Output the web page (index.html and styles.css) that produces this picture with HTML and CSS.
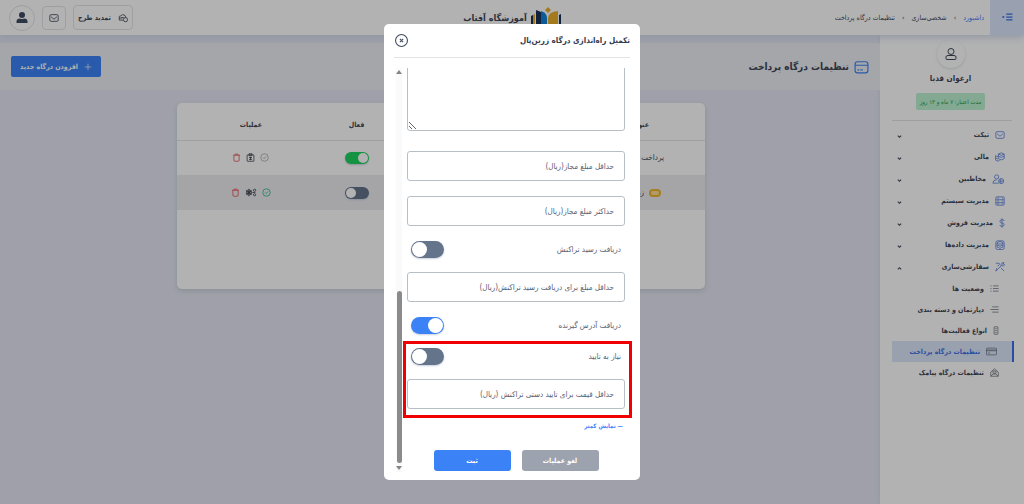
FILE: index.html
```html
<!DOCTYPE html>
<html lang="fa" dir="rtl">
<head>
<meta charset="utf-8">
<title>تنظیمات درگاه پرداخت</title>
<link rel="stylesheet" href="styles.css">
</head>
<body>
<svg class="defs" aria-hidden="true">
  <symbol id="mail" viewBox="0 0 24 24"><rect x="2" y="4" width="20" height="16" rx="3"/><path d="M5 9l7 6 7-6"/></symbol>
  <symbol id="chev" viewBox="0 0 24 24"><path d="M4 8l8 8 8-8"/></symbol>
  <symbol id="trash" viewBox="0 0 24 24"><path d="M3 6h18M8 6V3h8v3M5 6v13q0 3 3 3h8q3 0 3-3V6"/></symbol>
  <symbol id="check" viewBox="0 0 24 24"><circle cx="12" cy="12" r="10"/><path d="M8 12l3 3 5-6"/></symbol>
  <symbol id="card" viewBox="0 0 24 24"><rect x="1" y="3" width="22" height="19" rx="4"/><path d="M1 9h22M5 17h3M10 17h4"/></symbol>
</svg>

<header class="topbar">
  <div class="lead">
    <button class="menu-toggle" aria-label="منو"><svg class="icon" viewBox="0 0 24 24"><path d="M9 5h15M9 12h15M9 19h15"/><circle cx="2" cy="12" r="1"/></svg></button>
    <nav class="crumbs"><a href="#">داشبورد</a><i>›</i><span>شخصی‌سازی</span><i>›</i><span>تنظیمات درگاه پرداخت</span></nav>
  </div>
  <div class="brand">
    <svg class="brand-logo" viewBox="0 0 30 24"><path fill="#1b3157" d="M0 9l2-1v16H0zM5 3l5 2v19H5zM28 8l2-1v17h-2z"/><path fill="#1283d8" d="M10 4q6 2 6 7v13h-6z"/><path fill="#eab02c" d="M2 8l2-1v17H2zM17 11q0-6 10-7v20H17zM17 0l3 3-3 3-3-3z"/></svg>
    <span>آموزشگاه آفتاب</span>
  </div>
  <div class="tools">
    <button class="tool plan"><svg class="icon" viewBox="0 0 24 24"><path d="M3 17V9q0-2 3-2 5-6 11-1l2 5M3 17h9M8 11h6"/><circle cx="18" cy="16" r="5"/><path d="M3 12h7"/></svg>تمدید طرح</button>
    <button class="tool inbox" aria-label="پیام‌ها"><svg class="icon"><use href="#mail"/></svg></button>
    <button class="tool user" aria-label="کاربر"><svg viewBox="0 0 24 24"><circle cx="12" cy="7" r="6"/><path d="M1 23v-3q0-6 7-6 4 2 8 0 7 0 7 6v3z"/></svg></button>
  </div>
</header>

<div class="shell">
  <aside class="sidebar">
    <div class="profile">
      <div class="avatar"><svg class="icon" viewBox="0 0 24 24"><circle cx="12" cy="7" r="6"/><path d="M2 18q0-3 4-3h12q4 0 4 3v3q0 2-2 2H4q-2 0-2-2z"/></svg></div>
      <strong>ارغوان قدبا</strong>
      <span class="credit">مدت اعتبار: ۷ ماه و ۱۳ روز</span>
    </div>
    <ul class="menu">
      <li><a href="#"><svg class="icon"><use href="#mail"/></svg>تیکت<svg class="arrow"><use href="#chev"/></svg></a></li>
      <li><a href="#"><svg class="icon" viewBox="0 0 24 24"><path d="M8 5l7-3 7 3-7 3zM8 5v11l7 3 7-3V5M8 10l7 3 7-3M1 9v10l6 3 4-2M1 14l6 3M1 9l6 2"/></svg>مالی<svg class="arrow"><use href="#chev"/></svg></a></li>
      <li><a href="#"><svg class="icon wide" viewBox="0 0 29 24"><circle cx="10" cy="7" r="5"/><path d="M1 22q0-8 9-8M1 22h14M20 11v12M14 17h12"/><circle cx="21" cy="17" r="6"/></svg>مخاطبین<svg class="arrow"><use href="#chev"/></svg></a></li>
      <li><a href="#"><svg class="icon" viewBox="0 0 24 24"><rect x="2" y="2" width="20" height="20" rx="2"/><path d="M2 9h20M2 16h20M16 5h3M16 12h3M16 19h3M5 5h5M5 12h5M5 19h5"/></svg>مدیریت سیستم<svg class="arrow"><use href="#chev"/></svg></a></li>
      <li><a href="#"><svg class="icon slim" viewBox="0 0 14 24"><path d="M12 7q0-3-5-3T2 8t5 4 5 4-5 4-5-3M7 1v22"/></svg>مدیریت فروش<svg class="arrow"><use href="#chev"/></svg></a></li>
      <li><a href="#"><svg class="icon" viewBox="0 0 24 24"><rect x="2" y="2" width="20" height="21" rx="4"/><ellipse cx="12" cy="7" rx="7" ry="3"/><path d="M5 7v10q7 6 14 0V7M5 12q7 6 14 0"/></svg>مدیریت داده‌ها<svg class="arrow"><use href="#chev"/></svg></a></li>
      <li><a href="#"><svg class="icon" viewBox="0 0 24 24"><path d="M2 3h8l3 5M2 22L17 7l-1-4 5-2-1 4 3 1-3 4-3-1M14 14l8 8M6 10l4-3M2 22l2-7"/></svg>سفارشی‌سازی<svg class="arrow up"><use href="#chev"/></svg></a>
        <ul class="submenu">
          <li><a href="#"><svg class="icon" viewBox="0 0 24 24"><path d="M8 5h15M8 12h15M8 19h15M1 5h3M1 12h3M1 19h3"/></svg>وضعیت ها</a></li>
          <li><a href="#"><svg class="icon" viewBox="0 0 24 24"><path d="M6 5h17M1 12h22M6 19h17"/></svg>دپارتمان و دسته بندی</a></li>
          <li><a href="#"><svg class="icon slim" viewBox="0 0 14 24"><rect x="2" y="2" width="10" height="20" rx="1"/><path d="M5 7h4M5 12h4M5 17h4"/></svg>انواع فعالیت‌ها</a></li>
          <li><a href="#" class="active"><svg class="icon wide" viewBox="0 0 29 24"><rect x="1" y="3" width="27" height="18" rx="2"/><path d="M1 8h27M1 10h27M5 16h6"/></svg>تنظیمات درگاه پرداخت</a></li>
          <li><a href="#"><svg class="icon" viewBox="0 0 24 24"><path d="M2 11l10-9 10 9v11H2zM2 22l6-6h8l6 6M8 8h8v6H8z"/></svg>تنظیمات درگاه پیامک</a></li>
        </ul>
      </li>
    </ul>
  </aside>

  <main class="content">
    <div class="page-head">
      <h1><svg class="icon"><use href="#card"/></svg>تنظیمات درگاه پرداخت</h1>
      <button class="add"><svg class="icon" viewBox="0 0 24 24"><path d="M12 2v20M2 12h20"/></svg>افزودن درگاه جدید</button>
    </div>
    <section class="card">
      <table>
        <colgroup><col class="c-title"><col><col class="c-active"><col class="c-actions"></colgroup>
        <thead><tr><th class="name">عنوان</th><th></th><th>فعال</th><th>عملیات</th></tr></thead>
        <tbody>
          <tr><td class="name">پرداخت</td><td></td>
            <td><input type="checkbox" class="switch small green" aria-label="فعال" checked></td>
            <td><div class="actions"><svg class="icon muted"><use href="#check"/></svg><svg class="icon dark" viewBox="0 0 24 24"><rect x="3" y="5" width="18" height="17" rx="1"/><path d="M8 2h8v5H8zM8 12h8M8 17h8M12 10v9"/></svg><svg class="icon red"><use href="#trash"/></svg></div></td></tr>
          <tr><td class="name"><span class="coin"></span>زرین‌پال</td><td></td>
            <td><input type="checkbox" class="switch small" aria-label="فعال"></td>
            <td><div class="actions"><svg class="icon teal"><use href="#check"/></svg><svg class="icon dark wide" viewBox="0 0 29 24"><circle cx="9" cy="12" r="7"/><circle cx="9" cy="12" r="3"/><path d="M9 2v20M1 7l16 10M1 17L17 7"/><circle cx="24" cy="6" r="3"/><circle cx="24" cy="18" r="3"/><path d="M18 12h8"/></svg><svg class="icon red"><use href="#trash"/></svg></div></td></tr>
        </tbody>
      </table>
    </section>
  </main>
</div>

<div class="overlay">
  <form class="modal" role="dialog" aria-labelledby="dlg-title">
    <div class="modal-head">
      <h2 id="dlg-title">تکمیل راه‌اندازی درگاه زرین‌پال</h2>
      <button type="button" class="close" aria-label="بستن"><svg viewBox="0 0 24 24"><circle cx="12" cy="12" r="11"/><path d="M9 9l6 6M15 9l-6 6"/></svg></button>
    </div>
    <div class="modal-body">
      <div class="fields">
        <textarea class="field note" aria-label="توضیحات"></textarea>
        <input class="field" type="text" placeholder="حداقل مبلغ مجاز(ریال)" aria-label="حداقل مبلغ مجاز">
        <input class="field" type="text" placeholder="حداکثر مبلغ مجاز(ریال)" aria-label="حداکثر مبلغ مجاز">
        <label class="option">دریافت رسید تراکنش<input type="checkbox" class="switch"></label>
        <input class="field" type="text" placeholder="حداقل مبلغ برای دریافت رسید تراکنش(ریال)" aria-label="حداقل مبلغ رسید">
        <label class="option">دریافت آدرس گیرنده<input type="checkbox" class="switch" checked></label>
        <div class="group">
          <label class="option">نیاز به تایید<input type="checkbox" class="switch"></label>
          <input class="field" type="text" placeholder="حداقل قیمت برای تایید دستی تراکنش (ریال)" aria-label="حداقل قیمت تایید دستی">
          <span class="highlight"></span>
        </div>
        <a class="less" href="#">— نمایش کمتر</a>
        <div class="buttons"><button type="button" class="btn cancel">لغو عملیات</button><button type="submit" class="btn save">ثبت</button></div>
      </div>
      <div class="scrollbar"><span class="tip top"></span><span class="thumb"></span><span class="tip bottom"></span></div>
    </div>
  </form>
</div>
</body>
</html>
```

FILE: styles.css
```css
* { box-sizing: border-box; }
body {
  margin: 0;
  height: 100vh;
  overflow: hidden;
  display: flex;
  flex-direction: column;
  background: #e4e6f2;
  color: #3f4757;
  font: 7px "DejaVu Sans Condensed", "DejaVu Sans", sans-serif;
}
button, input, textarea { font: inherit; color: inherit; }
button { padding: 0; border: 0; cursor: pointer; }
a { color: inherit; text-decoration: none; }
ul { list-style: none; margin: 0; padding: 0; }
.defs { position: absolute; width: 0; height: 0; }
.icon { width: 10px; height: 10px; flex: none; fill: none; stroke: currentColor; stroke-width: 2; }
.icon.wide { width: 13px; }
.icon.slim { width: 6px; }

.topbar {
  height: 35px;
  flex: none;
  position: relative;
  z-index: 1;
  display: grid;
  grid-template-columns: 1fr auto 1fr;
  align-items: center;
  background: #fff;
  box-shadow: 0 2px 8px #cbd5e8;
}
.lead { display: flex; align-items: center; }
.menu-toggle { width: 34px; height: 35px; background: #dbe5fd; color: #3b6fe0; }
.menu-toggle .icon { width: 13px; height: 10px; stroke-width: 3; }
.crumbs { display: flex; gap: 7px; padding-right: 6px; font-size: 7px; }
.crumbs a { color: #3b82f6; }
.crumbs i { font-style: normal; }
.brand { display: flex; align-items: center; gap: 4px; font-size: 9px; font-weight: bold; }
.brand-logo { width: 30px; height: 24px; margin-top: 2px; }
.tools { display: flex; justify-content: flex-end; align-items: center; gap: 7px; padding-left: 9px; }
.tool {
  display: flex;
  align-items: center;
  justify-content: center;
  gap: 7px;
  height: 25px;
  border: 1px solid #e2e4e8;
  border-radius: 4px;
  background: #fff;
}
.plan { width: 60px; font-weight: bold; }
.inbox { width: 24px; height: 24px; }
.user { width: 26px; height: 26px; border-radius: 50%; }
.user svg { width: 12px; height: 13px; fill: #3f4c60; }

.shell { flex: 1; display: flex; min-height: 0; }
.sidebar { width: 144px; flex: none; padding: 5px 10px 0 12px; background: #fff; box-shadow: 0 0 4px #ccd2e4; }
.profile { display: flex; flex-direction: column; align-items: center; margin-right: 2px; padding: 0 3px 10px 0; border-bottom: 1px solid #e2e3e6; }
.avatar { width: 28px; height: 28px; display: grid; place-items: center; border-radius: 50%; box-shadow: 0 1px 3px #dcdfe5; }
.avatar .icon { width: 12px; height: 14px; }
.profile strong { margin-top: 4px; font-size: 8px; line-height: 14px; }
.credit { margin-top: 7px; padding: 0 4px; border-radius: 2px; background: #bdf2d2; color: #189a50; font-size: 6px; line-height: 17px; white-space: nowrap; -webkit-text-stroke: 0; }
.menu { padding-top: 3px; }
.menu a { display: flex; align-items: center; gap: 6px; height: 22px; padding: 0 9px 0 5px; font-weight: bold; white-space: nowrap; }
.menu .icon { color: #5f83dc; }
.arrow { width: 5px; height: 5px; margin: 2px auto 0 0; fill: none; stroke: currentColor; stroke-width: 5; }
.arrow.up { transform: rotate(180deg); }
.menu .submenu a { height: 21px; padding: 0 15px; }
.menu .submenu .icon { width: 9px; height: 9px; color: #6b7280; }
.menu .submenu .wide { width: 11px; }
.menu .submenu .slim { width: 6px; }
.menu .submenu .active { border-right: 2px solid #3b6ff0; background: #dce7fb; color: #3b72e8; }

.content { flex: 1; min-width: 0; padding-top: 8px; }
.page-head { display: flex; align-items: center; justify-content: space-between; height: 47px; padding: 0 11px; background: #edeef3; }
.page-head h1 { display: flex; align-items: center; gap: 5px; margin: 0; font-size: 10px; }
.page-head h1 .icon { width: 15px; height: 14px; color: #3b82f6; }
.add { display: flex; align-items: center; justify-content: center; gap: 6px; width: 90px; height: 21px; border-radius: 2px; background: #3b82f6; color: #fff; font-weight: bold; }
.add .icon { width: 8px; height: 8px; }
.card { width: 60%; height: 186px; margin: 13px 175px 0 0; overflow: hidden; border-radius: 5px; background: #fff; box-shadow: 0 2px 5px #c5ced8; }
table { width: 100%; table-layout: fixed; border-collapse: collapse; }
.c-title { width: 26%; }
.c-active { width: 12%; }
.c-actions { width: 28%; }
th { height: 37px; padding: 8px 0 0; border-bottom: 1px solid #e4e5e8; font-size: 7px; }
td { height: 35px; padding: 0; text-align: center; font-size: 8px; }
.name { padding-right: 41px; text-align: right; white-space: nowrap; }
th.name { padding-right: 56px; }
tbody tr:nth-child(2) { background: #ededf0; }
.coin { display: inline-block; width: 12px; height: 8px; margin: 0 3px 0 5px; border: 2px solid #eeb52d; border-radius: 4px; background: #fbe09a; vertical-align: middle; }
.actions { display: flex; align-items: center; justify-content: center; gap: 5px; }
.actions .icon { width: 9px; height: 9px; }
.actions .wide { width: 12px; }
.muted { color: #a3a5a9; }
.dark { color: #333a46; }
.red { color: #e5484d; }
.teal { color: #17b58a; }

.switch {
  appearance: none;
  width: 33px;
  height: 17px;
  margin: 0;
  padding: 1px;
  border-radius: 9px;
  background: #64748b;
  display: inline-flex;
  justify-content: flex-end;
  vertical-align: middle;
  box-shadow: 0 1px 2px #c9cfdd;
}
.switch::before { content: ""; width: 15px; height: 15px; border-radius: 50%; background: #fff; }
.switch:checked { justify-content: flex-start; background: #3b82f6; }
.switch.small { width: 24px; height: 12px; }
.switch.small::before { width: 10px; height: 10px; }
.switch.green:checked { background: #20d35f; }

.overlay { position: fixed; inset: 0; z-index: 2; display: flex; align-items: center; justify-content: center; background: rgba(0, 0, 0, .3); }
.modal { width: 256px; height: 456px; display: flex; flex-direction: column; padding: 0 0 8px; border-radius: 5px; background: #fff; }
.modal-head { display: flex; align-items: center; justify-content: space-between; height: 34px; flex: none; margin: 0 10px 10px; padding-left: 1px; border-bottom: 1px solid #e1e3e6; }
.modal-head h2 { margin: 0; color: #323c50; font-size: 8px; }
.close { width: 13px; height: 13px; background: none; }
.close svg { display: block; fill: none; stroke: #3f4b60; stroke-width: 2; }
.modal-body { flex: 1; min-height: 0; display: flex; gap: 5px; padding: 0 15px 0 10px; overflow: hidden; color: #566174; }
.fields { flex: 1; min-width: 0; display: flex; flex-direction: column; justify-content: flex-end; gap: 15px; }
.field { width: 100%; height: 30px; flex: none; padding: 0 10px; border: 1px solid #b7bfc6; border-radius: 3px; background: #fff; font-size: 8px; }
.field::placeholder { color: #566174; opacity: 1; }
.note { height: 90px; margin-bottom: 5px; resize: vertical; }
.option { display: flex; align-items: center; justify-content: space-between; height: 16px; flex: none; padding: 0 4px; color: #566174; font-size: 8px; }
.group { position: relative; display: flex; flex-direction: column; gap: 15px; }
.highlight { position: absolute; inset: -7px -7px -9px -4px; border: 3px solid #f00000; pointer-events: none; }
.less { align-self: flex-start; margin: -4px 2px 3px; color: #3b82f6; font-size: 6px; font-weight: bold; line-height: 12px; }
.buttons { display: flex; justify-content: center; gap: 11px; padding-bottom: 1px; }
.btn { width: 77px; height: 21px; border-radius: 3px; color: #fff; font-size: 7px; font-weight: bold; }
.cancel { background: #9ca3af; }
.save { background: #3b82f6; }
.scrollbar { width: 6px; flex: none; margin-left: 2px; display: flex; flex-direction: column; align-items: center; padding: 2px 0; background: #fafafa; }
.thumb { width: 5px; flex: 0 0 43%; margin-top: auto; border-radius: 3px; background: #8b8b8b; }
.tip { border: 3px solid transparent; }
.tip.top { border-top: 0; border-bottom: 4px solid #858585; }
.tip.bottom { margin-top: 3px; border-bottom: 0; border-top: 4px solid #858585; }
```
